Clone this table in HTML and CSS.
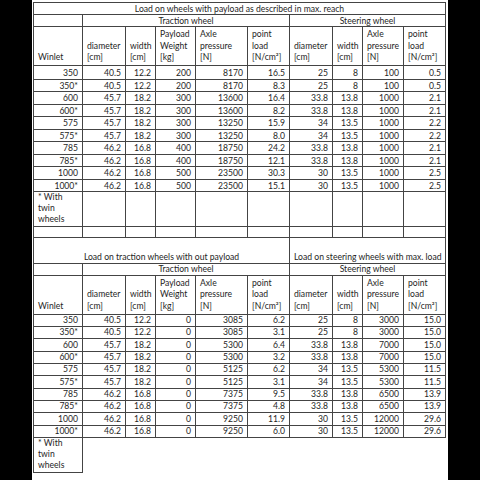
FILE: index.html
```html
<!DOCTYPE html>
<html lang="en">
<head>
<meta charset="utf-8">
<title>Wheel loads</title>
<link rel="stylesheet" href="styles.css">
</head>
<body>
<div class="page">
<table class="sheet">
<colgroup>
<col class="w49"><col class="w43"><col class="w30"><col class="w40"><col class="w52"><col class="w42"><col class="w43"><col class="w30"><col class="w41"><col class="w42">
</colgroup>
<tbody>
<tr class="h12"><td colspan="10" class="center">Load on wheels with payload as described in max. reach</td></tr>
<tr class="h12"><td></td><td colspan="5" class="center">Traction wheel</td><td colspan="4" class="center">Steering wheel</td></tr>
<tr class="h39 head"><td>Winlet</td><td>diameter<br>[cm]</td><td>width<br>[cm]</td><td>Payload<br>Weight<br>[kg]</td><td>Axle<br>pressure<br>[N]</td><td>point<br>load<br>[N/cm²]</td><td>diameter<br>[cm]</td><td>width<br>[cm]</td><td>Axle<br>pressure<br>[N]</td><td>point<br>load<br>[N/cm²]</td></tr>
<tr class="h14"><td>350</td><td>40.5</td><td>12.2</td><td>200</td><td>8170</td><td>16.5</td><td>25</td><td>8</td><td>100</td><td>0.5</td></tr>
<tr class="h12"><td>350*</td><td>40.5</td><td>12.2</td><td>200</td><td>8170</td><td>8.3</td><td>25</td><td>8</td><td>100</td><td>0.5</td></tr>
<tr class="h13"><td>600</td><td>45.7</td><td>18.2</td><td>300</td><td>13600</td><td>16.4</td><td>33.8</td><td>13.8</td><td>1000</td><td>2.1</td></tr>
<tr class="h12"><td>600*</td><td>45.7</td><td>18.2</td><td>300</td><td>13600</td><td>8.2</td><td>33.8</td><td>13.8</td><td>1000</td><td>2.1</td></tr>
<tr class="h13"><td>575</td><td>45.7</td><td>18.2</td><td>300</td><td>13250</td><td>15.9</td><td>34</td><td>13.5</td><td>1000</td><td>2.2</td></tr>
<tr class="h12"><td>575*</td><td>45.7</td><td>18.2</td><td>300</td><td>13250</td><td>8.0</td><td>34</td><td>13.5</td><td>1000</td><td>2.2</td></tr>
<tr class="h13"><td>785</td><td>46.2</td><td>16.8</td><td>400</td><td>18750</td><td>24.2</td><td>33.8</td><td>13.8</td><td>1000</td><td>2.1</td></tr>
<tr class="h12"><td>785*</td><td>46.2</td><td>16.8</td><td>400</td><td>18750</td><td>12.1</td><td>33.8</td><td>13.8</td><td>1000</td><td>2.1</td></tr>
<tr class="h13"><td>1000</td><td>46.2</td><td>16.8</td><td>500</td><td>23500</td><td>30.3</td><td>30</td><td>13.5</td><td>1000</td><td>2.5</td></tr>
<tr class="h12"><td>1000*</td><td>46.2</td><td>16.8</td><td>500</td><td>23500</td><td>15.1</td><td>30</td><td>13.5</td><td>1000</td><td>2.5</td></tr>
<tr class="h34"><td class="note">* With<br>twin<br>wheels</td><td></td><td></td><td></td><td></td><td></td><td></td><td></td><td></td><td></td></tr>
<tr class="h11"><td></td><td></td><td></td><td></td><td></td><td></td><td></td><td></td><td></td><td></td></tr>
<tr class="h26"><td colspan="6" class="center bottom">Load on traction wheels with out payload</td><td colspan="4" class="center bottom">Load on steering wheels with max. load</td></tr>
<tr class="h12"><td></td><td colspan="5" class="center">Traction wheel</td><td colspan="4" class="center">Steering wheel</td></tr>
<tr class="h39 head"><td>Winlet</td><td>diameter<br>[cm]</td><td>width<br>[cm]</td><td>Payload<br>Weight<br>[kg]</td><td>Axle<br>pressure<br>[N]</td><td>point<br>load<br>[N/cm²]</td><td>diameter<br>[cm]</td><td>width<br>[cm]</td><td>Axle<br>pressure<br>[N]</td><td>point<br>load<br>[N/cm²]</td></tr>
<tr class="h12"><td>350</td><td>40.5</td><td>12.2</td><td>0</td><td>3085</td><td>6.2</td><td>25</td><td>8</td><td>3000</td><td>15.0</td></tr>
<tr class="h12"><td>350*</td><td>40.5</td><td>12.2</td><td>0</td><td>3085</td><td>3.1</td><td>25</td><td>8</td><td>3000</td><td>15.0</td></tr>
<tr class="h13"><td>600</td><td>45.7</td><td>18.2</td><td>0</td><td>5300</td><td>6.4</td><td>33.8</td><td>13.8</td><td>7000</td><td>15.0</td></tr>
<tr class="h12"><td>600*</td><td>45.7</td><td>18.2</td><td>0</td><td>5300</td><td>3.2</td><td>33.8</td><td>13.8</td><td>7000</td><td>15.0</td></tr>
<tr class="h12"><td>575</td><td>45.7</td><td>18.2</td><td>0</td><td>5125</td><td>6.2</td><td>34</td><td>13.5</td><td>5300</td><td>11.5</td></tr>
<tr class="h13"><td>575*</td><td>45.7</td><td>18.2</td><td>0</td><td>5125</td><td>3.1</td><td>34</td><td>13.5</td><td>5300</td><td>11.5</td></tr>
<tr class="h12"><td>785</td><td>46.2</td><td>16.8</td><td>0</td><td>7375</td><td>9.5</td><td>33.8</td><td>13.8</td><td>6500</td><td>13.9</td></tr>
<tr class="h12"><td>785*</td><td>46.2</td><td>16.8</td><td>0</td><td>7375</td><td>4.8</td><td>33.8</td><td>13.8</td><td>6500</td><td>13.9</td></tr>
<tr class="h13"><td>1000</td><td>46.2</td><td>16.8</td><td>0</td><td>9250</td><td>11.9</td><td>30</td><td>13.5</td><td>12000</td><td>29.6</td></tr>
<tr class="h12"><td>1000*</td><td>46.2</td><td>16.8</td><td>0</td><td>9250</td><td>6.0</td><td>30</td><td>13.5</td><td>12000</td><td>29.6</td></tr>
<tr class="h35"><td class="note">* With<br>twin<br>wheels</td><td class="blank" colspan="9"></td></tr>
</tbody>
</table>
</div>
</body>
</html>
```

FILE: styles.css
```css
html, body {
  margin: 0;
  padding: 0;
  background: #000;
}

.page {
  width: 416px;
  height: 480px;
  margin-left: 32px;
  padding-top: 2px;
  box-sizing: border-box;
  background: #fff;
}

.sheet {
  border-collapse: collapse;
  table-layout: fixed;
  width: 413px;
  margin-left: 1px;
  font-family: Lato, "Open Sans", sans-serif;
  font-size: 8.6px;
  color: #1e1e1e;
}

.w49 { width: 49px; }
.w43 { width: 43px; }
.w30 { width: 30px; }
.w40 { width: 40px; }
.w52 { width: 52px; }
.w42 { width: 42px; }
.w41 { width: 41px; }

.sheet td {
  border: 1px solid #444;
  padding: 0 4px;
  line-height: 10px;
  text-align: right;
  vertical-align: middle;
  white-space: nowrap;
  overflow: hidden;
}

.sheet .head td {
  text-align: left;
  vertical-align: bottom;
  line-height: 11.6px;
  padding-bottom: 1px;
}

.sheet td.center {
  text-align: center;
}

.sheet td.bottom {
  vertical-align: bottom;
  padding-bottom: 1px;
}

.sheet td.note {
  text-align: left;
  vertical-align: top;
  line-height: 11.2px;
}

.sheet td.blank {
  border: none;
}

.h11 { height: 11px; }
.h12 { height: 12px; }
.h13 { height: 13px; }
.h14 { height: 14px; }
.h26 { height: 26px; }
.h34 { height: 34px; }
.h35 { height: 35px; }
.h39 { height: 39px; }
```
